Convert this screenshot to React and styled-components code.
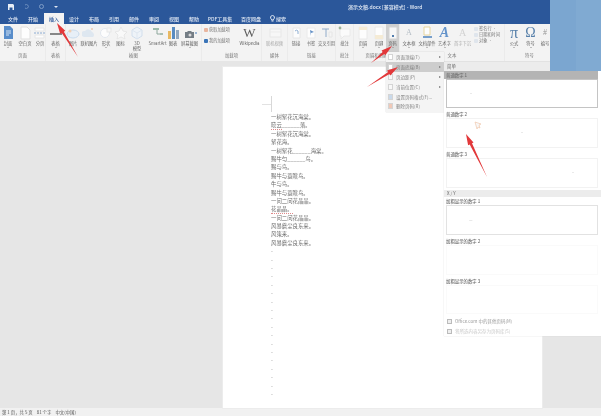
import React from "react";
import styled, { createGlobalStyle } from "styled-components";

const Global = createGlobalStyle`
  html, body { margin: 0; padding: 0; background: #e6e6e6; overflow: hidden; }
  * { box-sizing: border-box; }
`;

const cjk = `"Noto Sans CJK SC", "Liberation Sans", sans-serif`;

const Window = styled.div`
  position: relative;
  width: 601px;
  height: 416px;
  display: flex;
  flex-direction: column;
  overflow: hidden;
  background: #e6e6e6;
  font-family: ${cjk};
  filter: blur(0.5px);
`;

const TitleBar = styled.div`
  height: 13px;
  background: #2b579a;
  color: #e4ebf5;
  display: flex;
  align-items: center;
  padding-left: 8px;
  flex: none;
`;
const Quick = styled.div`
  width: 136px;
  display: flex;
  gap: 10px;
  align-items: center;
`;
const Title = styled.div`
  margin-left: 204px;
  font-size: 5px;
  white-space: nowrap;
  font-weight: 500;
`;

const TabRow = styled.div`
  height: 11px;
  background: #2b579a;
  display: flex;
  align-items: stretch;
  flex: none;
  padding-left: 4px;
`;
const Tab = styled.div`
  width: ${(p) => p.$w}px;
  display: flex;
  align-items: center;
  justify-content: center;
  gap: 1px;
  font-size: 5px;
  white-space: nowrap;
  font-weight: 500;
  color: ${(p) => (p.$active ? "#2b579a" : "#dfe7f3")};
  background: ${(p) => (p.$active ? "#f3f3f3" : "transparent")};
`;

const Ribbon = styled.div`
  height: 37px;
  background: #f3f3f3;
  display: flex;
  flex: none;
`;
const Group = styled.div`
  width: ${(p) => p.$w}px;
  flex: none;
  display: flex;
  flex-direction: column;
  border-right: 1px solid #ebebeb;
`;
const Tools = styled.div`
  height: 28px;
  display: flex;
`;
const GroupLabel = styled.div`
  height: 9px;
  font-size: 4.4px;
  line-height: 7px;
  color: #777;
  text-align: center;
  white-space: nowrap;
`;
const Tool = styled.div`
  width: ${(p) => p.$w}px;
  flex: none;
  display: flex;
  flex-direction: column;
  align-items: center;
  padding-top: 2px;
  background: ${(p) => (p.$active ? "#cfcfcf" : "transparent")};
`;
const ToolIcon = styled.div`
  height: 14px;
  display: flex;
  align-items: center;
  justify-content: center;
  opacity: 0.85;
`;
const ToolLabel = styled.div`
  margin-top: 1px;
  font-size: 4.3px;
  line-height: 5px;
  color: ${(p) => (p.$dim ? "#aaa" : "#666")};
  text-align: center;
  white-space: pre;
`;
const Caret = styled.div`
  width: 0;
  height: 0;
  margin-top: 1px;
  border-left: 1px solid transparent;
  border-right: 1px solid transparent;
  border-top: 1px solid #888;
`;
const Stack = styled.div`
  width: ${(p) => p.$w}px;
  flex: none;
  display: flex;
  flex-direction: column;
  gap: ${(p) => p.$gap}px;
  padding: ${(p) => p.$top}px 0 0 2px;
`;
const StackItem = styled.div`
  display: flex;
  align-items: center;
  gap: 1px;
  font-size: 4.2px;
  line-height: 5px;
  white-space: nowrap;
  color: #777;
`;
const Dot = styled.span`
  width: 4px;
  height: 4px;
  flex: none;
  border-radius: 1px;
  background: ${(p) => p.$c};
`;
const BigGlyph = styled.span`
  font-family: "Liberation Serif", serif;
  font-size: ${(p) => p.$s}px;
  line-height: 14px;
  font-style: ${(p) => (p.$i ? "italic" : "normal")};
  font-weight: ${(p) => (p.$b ? 700 : 400)};
  color: ${(p) => p.$c};
`;

const Canvas = styled.div`
  flex: 1;
  min-height: 0;
  background: #e6e6e6;
  padding: 6px 0 0 223px;
`;
const Page = styled.div`
  width: 319px;
  height: 100%;
  background: #fff;
  box-shadow: 0 0 0 1px #ececec;
  padding: 46px 0 0 48px;
  position: relative;
  overflow: hidden;
`;
const CropMark = styled.div`
  position: absolute;
  left: 39px;
  top: 37px;
  width: 10px;
  height: 1px;
  background: #e2e2e2;
  &::after {
    content: "";
    position: absolute;
    right: 0;
    top: -8px;
    width: 1px;
    height: 16px;
    background: #d8d8d8;
  }
`;
const DocLine = styled.div`
  height: 8.4px;
  line-height: 8.4px;
  font-family: "Noto Sans CJK SC", serif;
  font-size: 5.4px;
  color: ${(p) => (p.$faint ? "#aaa" : "#6a6a6a")};
  white-space: nowrap;
`;
const Mis = styled.span`
  border-bottom: 1px dotted #e08a8a;
`;

const StatusBar = styled.div`
  height: 8px;
  flex: none;
  background: #f1f1f1;
  display: flex;
  align-items: center;
  gap: 4px;
  padding-left: 2px;
  font-size: 4.4px;
  color: #555;
  white-space: nowrap;
`;

const Corner = styled.div`
  position: absolute;
  left: 550px;
  top: 0;
  width: 51px;
  height: 71px;
  display: flex;
`;
const CornerTone = styled.div`
  flex: 1;
  background: ${(p) => p.$c};
`;

const Menu = styled.div`
  position: absolute;
  left: 386px;
  top: 52px;
  width: 58px;
  height: 60px;
  background: #f4f4f4;
  box-shadow: 0 0 1px #bbb;
  padding-top: 0.5px;
`;
const MenuItem = styled.div`
  height: 9.8px;
  display: flex;
  align-items: center;
  padding: 0 3px 0 2px;
  gap: 3px;
  font-size: 4.5px;
  color: #808080;
  white-space: nowrap;
  background: ${(p) => (p.$active ? "#cdcdcd" : "transparent")};
`;
const MenuIcon = styled.span`
  width: 5px;
  height: 6px;
  flex: none;
  background: ${(p) => p.$c};
  border: 1px solid #d4d4d4;
`;
const MenuText = styled.span`
  flex: 1;
`;
const SubArrow = styled.span`
  width: 0;
  height: 0;
  border-top: 1.5px solid transparent;
  border-bottom: 1.5px solid transparent;
  border-left: 2px solid #777;
`;

const Gallery = styled.div`
  position: absolute;
  left: 444px;
  top: 62px;
  width: 157px;
  height: 274px;
  background: #fff;
  display: flex;
  flex-direction: column;
  box-shadow: 0 0 1px #ccc;
`;
const Section = styled.div`
  height: ${(p) => p.$h}px;
  flex: none;
  background: #ececec;
  font-size: 4.4px;
  line-height: ${(p) => p.$h}px;
  color: #666;
  padding-left: 3px;
`;
const Item = styled.div`
  height: ${(p) => p.$h}px;
  flex: none;
  display: flex;
  flex-direction: column;
`;
const ItemTitle = styled.div`
  height: ${(p) => p.$h}px;
  flex: none;
  font-size: 4.4px;
  line-height: ${(p) => p.$h}px;
  font-weight: 500;
  color: #707070;
  padding-left: 2px;
  margin-right: 3px;
  background: ${(p) => (p.$sel ? "#b4b4b4" : "transparent")};
`;
const Preview = styled.div`
  flex: 1;
  margin: 0 3px 2px 2px;
  background: #fff;
  border: 1px solid ${(p) => p.$line};
  display: flex;
  align-items: center;
  padding: 0 22px;
  justify-content: ${(p) => p.$pos};
  font-size: 4px;
  color: #aaa;
`;
const Foot = styled.div`
  flex: none;
  height: 10px;
  display: flex;
  align-items: center;
  gap: 3px;
  padding-left: 3px;
  font-size: 4.5px;
  white-space: nowrap;
  color: ${(p) => (p.$dim ? "#c8c8c8" : "#9a9a9a")};
`;
const FootIcon = styled.span`
  width: 5px;
  height: 5px;
  flex: none;
  border: 1px solid #bbb;
  background: #eee;
`;
const Overlay = styled.svg`
  position: absolute;
  left: 0;
  top: 0;
  pointer-events: none;
`;

const Ic = ({ k }) => {
  const s = { width: 14, height: 14, viewBox: "0 0 14 14" };
  switch (k) {
    case "cover":
      return <svg {...s}><path d="M3 0h6l3 3v10H3z" fill="#3f7cc4" /><path d="M5 5h5M5 7h5M5 9h3" stroke="#cfe0f3" /></svg>;
    case "blank":
      return <svg {...s}><path d="M3 1h6l3 3v9H3z" fill="#fff" stroke="#ddd" /></svg>;
    case "break":
      return <svg {...s}><path d="M2 2h9v3H2zM2 9h9v3H2z" fill="#fff" stroke="#e4e4e4" /><path d="M1 7h11" stroke="#7b9fcb" strokeDasharray="2 1" /></svg>;
    case "table":
      return <svg {...s}><path d="M1 8h12" stroke="#555" strokeWidth="1.6" /></svg>;
    case "pic":
      return <svg {...s}><ellipse cx="7" cy="8" rx="6" ry="4" fill="#e6eff8" stroke="#c0d6ec" /><circle cx="4" cy="5" r="1.5" fill="#f1c9a6" /></svg>;
    case "cloud":
      return <svg {...s}><path d="M2 11a3 3 0 0 1 1-6 4 4 0 0 1 7 1 3 3 0 0 1 1 5z" fill="#dbe5f0" /><circle cx="10" cy="3" r="1" fill="#edc4a8" /></svg>;
    case "shape":
      return <svg {...s}><circle cx="6" cy="7" r="4.5" fill="#fff" stroke="#e0e6ee" /><rect x="8" y="2" width="4" height="4" fill="#f8f8f8" stroke="#e6e6e6" /></svg>;
    case "star":
      return <svg {...s}><path d="M7 1l2 4 4 1-3 3 1 4-4-2-4 2 1-4-3-3 4-1z" fill="#fbfbfb" stroke="#e4e4e4" /></svg>;
    case "cube":
      return <svg {...s}><path d="M7 1l5 3v6l-5 3-5-3V4z" fill="#eef4fa" stroke="#ccdbeb" /><path d="M2 4l5 3 5-3M7 7v6" stroke="#dbe5f0" fill="none" /></svg>;
    case "smart":
      return <svg {...s}><path d="M2 2h6v2H2z" fill="#8fb2a0" /><path d="M6 4v4h3" stroke="#7d9a8e" fill="none" /><path d="M9 7h3v2H9z" fill="#9cb7ab" /></svg>;
    case "chart":
      return <svg {...s}><rect x="2" y="5" width="3" height="8" fill="#e7b04a" /><rect x="6" y="1" width="3" height="12" fill="#3f79b8" /><rect x="10" y="4" width="3" height="9" fill="#7f9ab8" /></svg>;
    case "camera":
      return <svg {...s}><path d="M2 6h2l1-1h3l1 1h2v6H2z" fill="#606a74" /><circle cx="7" cy="9" r="1.5" fill="#d8d8d8" /><circle cx="13" cy="7" r="1" fill="#6d96c4" /></svg>;
    case "video":
      return <svg {...s}><rect x="2" y="3" width="11" height="8" fill="#f8f8f8" stroke="#e6e6e6" /><path d="M2 6h11" stroke="#ebebeb" /></svg>;
    case "link":
      return <svg {...s}><path d="M4 2h7v10H4z" fill="#fff" stroke="#e4e4e4" /><path d="M6 5a2 2 0 0 1 3 0v3" stroke="#7fa5cf" fill="none" /></svg>;
    case "flag":
      return <svg {...s}><path d="M3 2h8v10H3z" fill="#fff" stroke="#e8e8e8" /><path d="M6 4l4 2-3 1v3z" fill="#4a7fbe" /></svg>;
    case "cross":
      return <svg {...s}><path d="M2 3h7M6 3v8" stroke="#7f9fc2" /><path d="M9 6h3v5H9z" fill="#f6f6f6" stroke="#e4e4e4" /></svg>;
    case "note":
      return <svg {...s}><path d="M2 3h10v7H6l-3 3v-3H2z" fill="#fdfdfd" stroke="#e8e8e8" /><circle cx="2" cy="2" r="1.4" fill="#8fa98a" /></svg>;
    case "header":
      return <svg {...s}><path d="M3 1h8v12H3z" fill="#fff" stroke="#e8e8e8" /><path d="M3 1h8v3H3z" fill="#f6ead0" /></svg>;
    case "footer":
      return <svg {...s}><path d="M3 1h8v12H3z" fill="#fff" stroke="#e8e8e8" /><path d="M3 9h8v4H3z" fill="#f6ead0" /></svg>;
    case "pageno":
      return <svg {...s}><path d="M3 1h8v12H3z" fill="#fff" stroke="#d4d4d4" /><path d="M6 9h2v2H6z" fill="#3c6fa8" /></svg>;
    case "textbox":
      return <BigGlyph $s={8} $c="#aab4be">A</BigGlyph>;
    case "parts":
      return <svg {...s}><path d="M4 1h6v8H4z" fill="#fff" stroke="#e6d190" /><path d="M3 11h9" stroke="#3f79b8" strokeWidth="1.6" /></svg>;
    default:
      return null;
  }
};

const Shape = ({ icon, glyph }) =>
  glyph ? (
    <BigGlyph $s={glyph.s} $c={glyph.c} $i={glyph.i} $b={glyph.b}>{glyph.t}</BigGlyph>
  ) : (
    <Ic k={icon} />
  );

const groups = [
  { label: "页面", w: 46, items: [
    { l: "封面", w: 16, icon: "cover", caret: 1 }, { l: "空白页", w: 18, icon: "blank" }, { l: "分页", w: 12, icon: "break" } ] },
  { label: "表格", w: 20, items: [{ l: "表格", w: 19, icon: "table", caret: 1 }] },
  { label: "插图", w: 136, items: [
    { l: "图片", w: 14, icon: "pic" }, { l: "联机图片", w: 18, icon: "cloud" }, { l: "形状", w: 16, icon: "shape", caret: 1 },
    { l: "图标", w: 13, icon: "star" }, { l: "3D\n模型", w: 20, icon: "cube" }, { l: "SmartArt", w: 21, icon: "smart" },
    { l: "图表", w: 10, icon: "chart" }, { l: "屏幕截图", w: 23, icon: "camera", caret: 1 } ] },
  { label: "加载项", w: 60, stack: { w: 36, top: 3, gap: 6, rows: [["获取加载项", "#e9b6a0"], ["我的加载项", "#3a74b8"]] },
    items: [{ l: "Wikipedia", w: 23, glyph: { t: "W", s: 13, c: "#444" } }] },
  { label: "媒体", w: 26, items: [{ l: "联机视频", w: 25, icon: "video", dim: 1 }] },
  { label: "链接", w: 48, items: [
    { l: "链接", w: 16, icon: "link" }, { l: "书签", w: 14, icon: "flag" }, { l: "交叉引用", w: 17, icon: "cross" } ] },
  { label: "批注", w: 18, items: [{ l: "批注", w: 17, icon: "note" }] },
  { label: "页眉和页脚", w: 46, items: [
    { l: "页眉", w: 18, icon: "header", caret: 1 }, { l: "页脚", w: 14, icon: "footer", caret: 1 },
    { l: "页码", w: 13, icon: "pageno", caret: 1, active: 1 } ] },
  { label: "文本", w: 105, items: [
    { l: "文本框", w: 18, icon: "textbox", caret: 1 }, { l: "文档部件", w: 18, icon: "parts", caret: 1 },
    { l: "艺术字", w: 17, glyph: { t: "A", s: 14, c: "#4c83c4", i: 1, b: 1 }, caret: 1 },
    { l: "首字下沉", w: 19, glyph: { t: "A", s: 10, c: "#ccc" }, dim: 1 } ],
    stack: { w: 32, top: 2, gap: 1, after: 1, rows: [["签名行 ·", "#dfe5ec"], ["日期和时间", "#dfe5ec"], ["对象 ·", "#dfe5ec"]] } },
  { label: "符号", w: 50, items: [
    { l: "公式", w: 18, glyph: { t: "π", s: 16, c: "#3d6d9e" }, caret: 1 },
    { l: "符号", w: 15, glyph: { t: "Ω", s: 14, c: "#3d6d9e" }, caret: 1 },
    { l: "编号", w: 14, glyph: { t: "#", s: 8, c: "#8a8a8a" } } ] },
];

const tabs = [
  ["文件", 18], ["开始", 22], ["插入", 20, true], ["设计", 20], ["布局", 20], ["引用", 20], ["邮件", 20],
  ["审阅", 20], ["视图", 20], ["帮助", 20], ["PDF工具集", 32], ["百度网盘", 30],
];

const lines = [
  "一树絮花沉海棠。", <><Mis>晓云</Mis>______落。</>, "一树絮花沉海棠。", "絮花海。", "一树絮花______海棠。",
  "赐牛勻______鸟。", "赐与鸟。", "赐牛与蓑瞎鸟。", "牛与鸟。", "赐牛与蓑瞎鸟。",
  "一问二问花晶晶。", <Mis key="m">花晶晶。</Mis>, "一问二问花晶晶。", "风暴蘑尘良东来。", "风策来。", "风暴蘑尘良东来。",
];

const menu = [
  ["页面顶端(T)", "#fff", true], ["页面底端(B)", "#fff", true, true], ["页边距(P)", "#f8f8f8", true],
  ["当前位置(C)", "#f8f8f8", true], ["设置页码格式(F)...", "#c9d9ea"], ["删除页码(R)", "#f0c9b8"],
];

const arrowPath = (x1, y1, x2, y2) => {
  const dx = x2 - x1, dy = y2 - y1, len = Math.hypot(dx, dy);
  const ux = dx / len, uy = dy / len, nx = -uy, ny = ux;
  const bx = x2 - ux * 11, by = y2 - uy * 11;
  const p = (x, y) => `${x.toFixed(1)},${y.toFixed(1)}`;
  return [
    p(x1, y1),
    p(bx + nx * 1.3, by + ny * 1.3),
    p(bx + nx * 3, by + ny * 3),
    p(x2, y2),
    p(bx - nx * 3, by - ny * 3),
    p(bx - nx * 1.3, by - ny * 1.3),
  ].join(" ");
};

export default function App() {
  return (
    <Window>
      <Global />
      <TitleBar>
        <Quick>
          <svg width="6" height="6" viewBox="0 0 6 6"><path d="M0 0h5l1 1v5H0z" fill="#e8eef6" /><path d="M1.500 3.500h3V6h-3z" fill="#2b579a" /></svg>
          <svg width="5" height="5" viewBox="0 0 5 5"><path d="M1 1a2 2 0 1 1 0 3" stroke="#6f90bf" fill="none" /></svg>
          <svg width="5" height="5" viewBox="0 0 5 5"><circle cx="2.500" cy="2.500" r="2" stroke="#7e9cc6" fill="none" /></svg>
          <svg width="4" height="4" viewBox="0 0 4 4"><path d="M0 1h4L2 3z" fill="#dfe7f3" /></svg>
        </Quick>
        <Title>演示文稿.docx [兼容模式] - Word</Title>
      </TitleBar>
      <TabRow>
        {tabs.map(([t, w, a]) => <Tab key={t} $w={w} $active={a}>{t}</Tab>)}
        <Tab $w={24}>
          <svg width="5" height="7" viewBox="0 0 5 7"><path d="M2.500.5a2 2 0 0 1 1 3.700V5h-2v-.8a2 2 0 0 1 1-3.700zM1.500 6h2" stroke="#dfe7f3" fill="none" /></svg>
          搜索
        </Tab>
      </TabRow>
      <Ribbon>
        {groups.map((g) => (
          <Group key={g.label} $w={g.w}>
            <Tools>
              {g.stack && !g.stack.after && (
                <Stack $w={g.stack.w} $top={g.stack.top} $gap={g.stack.gap}>
                  {g.stack.rows.map(([t, c]) => <StackItem key={t}><Dot $c={c} />{t}</StackItem>)}
                </Stack>
              )}
              {g.items.map((it) => (
                <Tool key={it.l} $w={it.w} $active={it.active}>
                  <ToolIcon><Shape icon={it.icon} glyph={it.glyph} /></ToolIcon>
                  <ToolLabel $dim={it.dim}>{it.l}</ToolLabel>
                  {it.caret && <Caret />}
                </Tool>
              ))}
              {g.stack && g.stack.after && (
                <Stack $w={g.stack.w} $top={g.stack.top} $gap={g.stack.gap}>
                  {g.stack.rows.map(([t, c]) => <StackItem key={t}><Dot $c={c} />{t}</StackItem>)}
                </Stack>
              )}
            </Tools>
            <GroupLabel>{g.label}</GroupLabel>
          </Group>
        ))}
      </Ribbon>
      <Canvas>
        <Page>
          <CropMark />
          {lines.map((l, i) => <DocLine key={i}>{l}</DocLine>)}
          {Array.from({ length: 18 }, (_, i) => <DocLine key={`d${i}`} $faint>-</DocLine>)}
        </Page>
      </Canvas>
      <StatusBar>
        <span>第 1 页，共 5 页</span>
        <span>81 个字</span>
        <span>中文(中国)</span>
      </StatusBar>

      <Menu>
        {menu.map(([t, c, sub, act]) => (
          <MenuItem key={t} $active={act}>
            <MenuIcon $c={c} />
            <MenuText>{t}</MenuText>
            {sub && <SubArrow />}
          </MenuItem>
        ))}
      </Menu>

      <Gallery>
        <Section $h={9}>简单</Section>
        <Item $h={39}>
          <ItemTitle $h={8} $sel>普通数字 1</ItemTitle>
          <Preview $line="#c4c4c4" $pos="flex-start">·</Preview>
        </Item>
        <Item $h={40}>
          <ItemTitle $h={8}>普通数字 2</ItemTitle>
          <Preview $line="#f2f2f2" $pos="center">·</Preview>
        </Item>
        <Item $h={40}>
          <ItemTitle $h={8}>普通数字 3</ItemTitle>
          <Preview $line="#f2f2f2" $pos="flex-end">·</Preview>
        </Item>
        <Section $h={7}>X / Y</Section>
        <Item $h={40}>
          <ItemTitle $h={8}>加粗显示的数字 1</ItemTitle>
          <Preview $line="#e2e2e2" $pos="flex-start">—</Preview>
        </Item>
        <Item $h={40}>
          <ItemTitle $h={8}>加粗显示的数字 2</ItemTitle>
          <Preview $line="#fafafa" $pos="center" />
        </Item>
        <Item $h={39}>
          <ItemTitle $h={8}>加粗显示的数字 3</ItemTitle>
          <Preview $line="#fafafa" $pos="flex-end" />
        </Item>
        <Foot><FootIcon />Office.com 中的其他页码(M)</Foot>
        <Foot $dim><FootIcon />将所选内容另存为页码库(S)</Foot>
      </Gallery>

      <Corner>
        <CornerTone $c="#7ba6d0" />
        <CornerTone $c="#80aad2" />
      </Corner>

      <Overlay width="601" height="416" viewBox="0 0 601 416">
        <path d="M475 122l2 7 1-2 2 1-1-3 2-1z" fill="#f8f8f8" stroke="#efc0a0" strokeWidth=".6" />
        <g fill="#e2383a">
          <polygon points={arrowPath(78, 57, 57, 23)} />
          <polygon points={arrowPath(371, 63, 392, 46)} />
          <polygon points={arrowPath(367, 87, 398, 67)} />
          <polygon points={arrowPath(487, 177, 466, 134)} />
        </g>
      </Overlay>
    </Window>
  );
}
